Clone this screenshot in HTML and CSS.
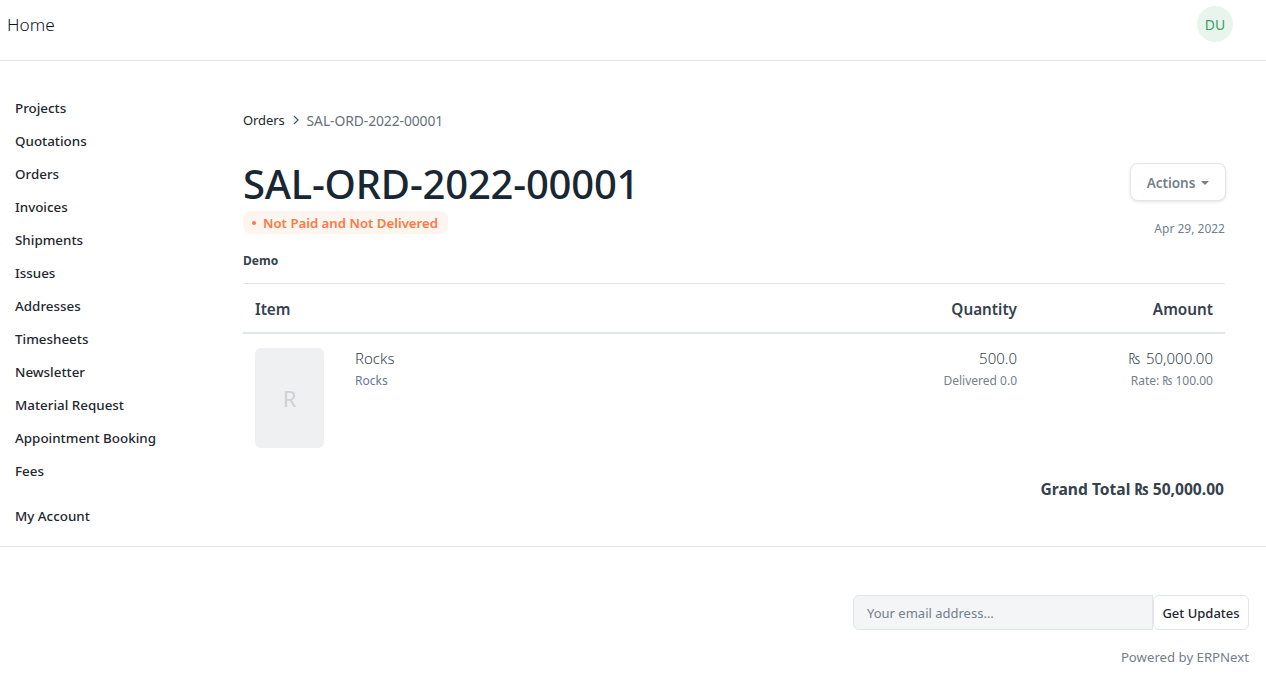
FILE: index.html
```html
<!DOCTYPE html>
<html lang="en">
<head>
    <meta charset="UTF-8">
    <meta name="viewport" content="width=device-width, initial-scale=1.0">
    <title>SAL-ORD-2022-00001</title>
    <link rel="stylesheet" href="styles.css">
</head>
<body>

    <header class="navbar">
        <a class="brand" href="#">Home</a>
        <div class="avatar">DU</div>
    </header>

    <div class="page">
        <!-- Sidebar -->
        <nav class="sidebar">
            <a href="#">Projects</a>
            <a href="#">Quotations</a>
            <a href="#">Orders</a>
            <a href="#">Invoices</a>
            <a href="#">Shipments</a>
            <a href="#">Issues</a>
            <a href="#">Addresses</a>
            <a href="#">Timesheets</a>
            <a href="#">Newsletter</a>
            <a href="#">Material Request</a>
            <a href="#">Appointment Booking</a>
            <a href="#">Fees</a>
            <a class="account-link" href="#">My Account</a>
        </nav>

        <main class="content">
            <div class="breadcrumb">
                <a href="#">Orders</a>
                <svg class="crumb-arrow" width="6" height="10" viewBox="0 0 6 10"><path d="M1 1l4 4-4 4" fill="none" stroke="#4c5a67" stroke-width="1.2"/></svg>
                <span class="crumb-current">SAL-ORD-2022-00001</span>
            </div>

            <div class="title-row">
                <div>
                    <h1>SAL-ORD-2022-00001</h1>
                    <div class="status"><i class="status-dot"></i>Not Paid and Not Delivered</div>
                </div>
                <div class="title-side">
                    <button class="actions">Actions<i class="caret"></i></button>
                    <div class="date">Apr 29, 2022</div>
                </div>
            </div>

            <div class="customer">Demo</div>

            <div class="row head-row">
                <div class="col-item">Item</div>
                <div class="col-qty">Quantity</div>
                <div class="col-amount">Amount</div>
            </div>

            <div class="row item-row">
                <div class="col-item item-cell">
                    <div class="thumb">R</div>
                    <div>
                        <div class="main-text">Rocks</div>
                        <div class="sub-text sub-blue">Rocks</div>
                    </div>
                </div>
                <div class="col-qty">
                    <div class="main-text">500.0</div>
                    <div class="sub-text">Delivered 0.0</div>
                </div>
                <div class="col-amount">
                    <div class="main-text">₨ 50,000.00</div>
                    <div class="sub-text">Rate: ₨ 100.00</div>
                </div>
            </div>

            <div class="grand-total">Grand Total ₨ 50,000.00</div>
        </main>
    </div>

    <footer class="footer">
        <form class="subscribe">
            <input type="text" placeholder="Your email address...">
            <button type="button">Get Updates</button>
        </form>
        <div class="powered">Powered by ERPNext</div>
    </footer>

</body>
</html>
```

FILE: styles.css
```css
/* Global */
body {
    margin: 0;
    font-family: "Noto Sans", "Open Sans", sans-serif;
    font-size: 13px;
    color: #1f272e;
    background-color: #fff;
}

a {
    color: inherit;
    text-decoration: none;
}

/* Navbar */
.navbar {
    display: flex;
    justify-content: space-between;
    align-items: center;
    box-sizing: border-box;
    height: 61px;
    padding: 0 33px 12px 7px;
    border-bottom: 1px solid #e2e6e9;
}

.brand {
    font-size: 17.3px;
    font-weight: 300;
    color: #0f161c;
}

.avatar {
    width: 36px;
    height: 36px;
    border-radius: 50%;
    background-color: #e9f5ec;
    color: #38a160;
    font-size: 14px;
    display: flex;
    align-items: center;
    justify-content: center;
}

/* Page layout */
.page {
    display: flex;
    height: 485px;
    border-bottom: 1px solid #e2e6e9;
}

.sidebar {
    width: 228px;
    flex-shrink: 0;
    padding: 31px 0 0 15px;
    display: flex;
    flex-direction: column;
}

.sidebar a {
    height: 33px;
    line-height: 33px;
    font-size: 13.4px;
    font-weight: 500;
}

.sidebar .account-link {
    margin-top: 12px;
}

.content {
    width: 982px;
    padding-top: 49px;
}

/* Breadcrumb */
.breadcrumb {
    display: flex;
    align-items: center;
    height: 20px;
    color: #687178;
    letter-spacing: -0.1px;
}

.breadcrumb a {
    color: #1f272e;
}

.crumb-arrow {
    margin: 0 8px;
}

.crumb-current {
    font-size: 13.9px;
}

/* Title */
.title-row {
    display: flex;
    justify-content: space-between;
    height: 75px;
    margin-top: 29px;
}

h1 {
    margin: 0;
    font-size: 40px;
    font-weight: 500;
    line-height: 50px;
    letter-spacing: -0.2px;
    color: #192734;
}

.status {
    display: flex;
    align-items: center;
    width: fit-content;
    height: 23px;
    margin-top: 2px;
    padding: 0 10px 0 9px;
    border-radius: 8px;
    background-color: #fff5f0;
    color: #ff7846;
    font-size: 13.2px;
    font-weight: 600;
}

.status-dot {
    width: 4px;
    height: 4px;
    border-radius: 50%;
    background-color: #ff7846;
    margin-right: 7px;
}

.title-side {
    margin-right: -1px;
    text-align: right;
}

.actions {
    width: 96px;
    height: 38px;
    margin-top: 4px;
    padding-top: 2px;
    border: 1px solid #e2e6e9;
    border-radius: 8px;
    background-color: #fff;
    box-shadow: 0 1px 3px rgba(25, 39, 52, 0.12);
    color: #74808b;
    font-family: inherit;
    font-size: 13.5px;
    font-weight: 600;
}

.caret {
    display: inline-block;
    margin-left: 6px;
    vertical-align: 3px;
    border-top: 4px solid #74808b;
    border-left: 4px solid transparent;
    border-right: 4px solid transparent;
}

.date {
    margin-top: 19px;
    padding-right: 1px;
    font-size: 12px;
    color: #74808b;
}

.customer {
    margin-top: 18px;
    height: 31px;
    line-height: 18px;
    font-size: 12px;
    font-weight: 700;
    color: #36414c;
}

/* Order table */
.row {
    display: flex;
    padding: 0 12px;
}

.col-item {
    flex: 1;
}

.col-qty {
    width: 200px;
    text-align: right;
}

.col-amount {
    width: 196px;
    text-align: right;
}

.col-amount .main-text {
    word-spacing: 2px;
}

.head-row {
    height: 48px;
    line-height: 50px;
    border-top: 1px solid #e2e6e9;
    border-bottom: 2px solid #e2e6e9;
    font-size: 15.3px;
    font-weight: 600;
    color: #36414c;
}

.item-row {
    padding-top: 14px;
    height: 100px;
}

.item-cell {
    display: flex;
    gap: 31px;
}

.thumb {
    width: 69px;
    height: 100px;
    border-radius: 6px;
    background-color: #eef0f2;
    color: #cdd2d7;
    font-size: 22px;
    display: flex;
    align-items: center;
    justify-content: center;
}

.main-text {
    font-size: 15px;
    font-weight: 300;
    line-height: 20px;
    color: #36414c;
}

.sub-text {
    margin-top: 2px;
    font-size: 12px;
    line-height: 22px;
    color: #74808b;
}

.sub-blue {
    color: #687890;
}

.grand-total {
    margin-top: 31px;
    padding-right: 1px;
    line-height: 20px;
    text-align: right;
    font-size: 15.6px;
    font-weight: 700;
    color: #36414c;
}

/* Footer */
.footer {
    padding: 48px 17px 0 0;
}

.subscribe {
    display: flex;
    justify-content: flex-end;
    margin: 0;
}

.subscribe input {
    width: 300px;
    height: 35px;
    box-sizing: border-box;
    padding: 0 13px;
    border: 1px solid #e2e6e9;
    border-radius: 6px 0 0 6px;
    background-color: #f3f5f7;
    font-family: inherit;
    font-size: 13px;
}

.subscribe input::placeholder {
    color: #74808b;
}

.subscribe button {
    height: 35px;
    width: 96px;
    padding: 0;
    border: 1px solid #e2e6e9;
    border-radius: 6px;
    background-color: #fff;
    font-family: inherit;
    font-size: 13px;
    font-weight: 500;
    color: #1f272e;
}

.powered {
    margin-top: 18px;
    text-align: right;
    font-size: 13.2px;
    color: #74808b;
}
```
